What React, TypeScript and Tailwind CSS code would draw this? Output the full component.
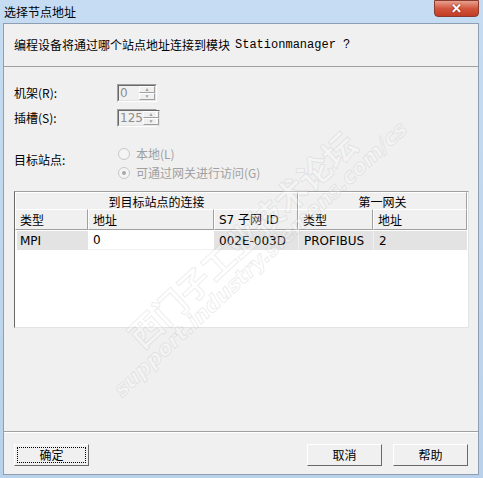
import React from "react";

const cjk = "font-['SimSun','Noto_Sans_CJK_SC',sans-serif]";
const sans = "font-['DejaVu_Sans','Noto_Sans_CJK_SC',sans-serif]";

// Small spin box (disabled look)
const SpinBox = ({ value }: { value: string }) => (
  <div className="flex h-[18px] w-[40px] border border-t-[#a0a0a0] border-l-[#a0a0a0] border-b-white border-r-white bg-[#f0f0f0]">
    <div className="flex flex-1 items-center border border-t-[#696969] border-l-[#696969] border-b-[#e3e3e3] border-r-[#e3e3e3] pl-[1px] text-[12px] leading-none text-[#8d8d8d]">
      <span className={sans}>{value}</span>
      <div className="ml-auto flex h-full w-[16px] flex-col">
        <div className="flex flex-1 items-center justify-center border border-t-white border-l-white border-b-[#a0a0a0] border-r-[#a0a0a0] text-[5px] text-[#a0a0a0]">▲</div>
        <div className="flex flex-1 items-center justify-center border border-t-white border-l-white border-b-[#a0a0a0] border-r-[#a0a0a0] text-[5px] text-[#a0a0a0]">▼</div>
      </div>
    </div>
  </div>
);

const Radio = ({ label, checked }: { label: string; checked?: boolean }) => (
  <div className="flex h-[19px] items-center gap-[6px]">
    <div className="flex h-[12px] w-[12px] items-center justify-center rounded-full border border-[#c8c8c8] bg-[#f4f4f4]">
      {checked && <div className="h-[4px] w-[4px] rounded-full bg-[#a8a8a8]" />}
    </div>
    <span className={`${cjk} text-[12px] text-[#a0a0a0]`}>{label}</span>
  </div>
);

const HeadCell = ({ children, className = "" }: { children: React.ReactNode; className?: string }) => (
  <div
    className={`flex items-center border border-t-white border-l-white border-b-[#a0a0a0] border-r-[#a0a0a0] bg-[#f0f0f0] text-[12px] text-black ${className}`}
  >
    {children}
  </div>
);

const Button = ({ label, focused }: { label: string; focused?: boolean }) => (
  <div className="h-[22px] w-[75px] border border-t-white border-l-white border-b-[#696969] border-r-[#696969] bg-[#f0f0f0] p-[2px]">
    <div
      className={`flex h-full items-center justify-center ${cjk} text-[12px] text-black ${
        focused ? "border border-dotted border-black" : ""
      }`}
    >
      {label}
    </div>
  </div>
);

export default function App() {
  const cols = "grid grid-cols-[73px_126px_84px_75px_94px]";
  return (
    <div className="relative flex h-[478px] w-[483px] flex-col overflow-hidden bg-gradient-to-b from-[#c6dcf2] to-[#b9d1ea] pb-[3px] pl-[3px] pr-[4px]">
      {/* title bar */}
      <div className="flex h-[23px] items-center">
        <span className={`${cjk} pl-[1px] text-[12px] text-black`}>选择节点地址</span>
        <div className="ml-auto flex h-[17px] w-[45px] -translate-y-[3px] items-center justify-center rounded-b-[4px] border border-[#8a3a2e] bg-gradient-to-b from-[#e8a18f] via-[#d2553d] to-[#c13d23]">
          <span className="text-[13px] font-bold leading-none text-white [text-shadow:0_0_2px_#6a1a10]">✕</span>
        </div>
      </div>

      {/* client area */}
      <div className="flex flex-1 flex-col border border-[#8e9fb3] bg-[#f0f0f0]">
        <div className="flex h-[43px] items-center border-b border-[#a0a0a0] pl-[10px]">
          <span className={`${cjk} text-[12px] text-black`}>编程设备将通过哪个站点地址连接到模块</span>
          <span className="ml-[5px] font-['Liberation_Mono',monospace] text-[12px] text-black">Stationmanager ?</span>
        </div>

        <div className="flex flex-col px-[10px] pt-[17px]">
          <div className="flex items-center">
            <span className={`${cjk} w-[103px] text-[12px] text-black`}>机架(R):</span>
            <SpinBox value="0" />
          </div>
          <div className="mt-[7px] flex items-center">
            <span className={`${cjk} w-[103px] text-[12px] text-black`}>插槽(S):</span>
            <SpinBox value="125" />
          </div>

          <div className="mt-[17px] flex">
            <span className={`${cjk} w-[103px] pt-[7px] text-[12px] text-black`}>目标站点:</span>
            <div className="flex flex-col pl-[1px]">
              <Radio label="本地(L)" />
              <Radio label="可通过网关进行访问(G)" checked />
            </div>
          </div>

          {/* connection table */}
          <div className="mt-[9px] h-[137px] w-[455px] border border-t-[#a0a0a0] border-l-[#696969] border-b-[#e3e3e3] border-r-[#e3e3e3] bg-white">
            <div className="grid h-[17px] grid-cols-[283px_169px]">
              <HeadCell className={`${cjk} justify-center`}>到目标站点的连接</HeadCell>
              <HeadCell className={`${cjk} justify-center`}>第一网关</HeadCell>
            </div>
            <div className={`${cols} h-[21px]`}>
              <HeadCell className={`${cjk} pl-[4px]`}>类型</HeadCell>
              <HeadCell className={`${cjk} pl-[4px]`}>地址</HeadCell>
              <HeadCell className={`${sans} pl-[4px]`}>S7 子网 ID</HeadCell>
              <HeadCell className={`${cjk} pl-[4px]`}>类型</HeadCell>
              <HeadCell className={`${cjk} pl-[4px]`}>地址</HeadCell>
            </div>
            <div className={`${cols} mt-[1px] h-[19px] text-[12px] text-black ${sans}`}>
              <div className="ml-[2px] flex items-center bg-[#e3e3e3] pl-[3px]">MPI</div>
              <div className="flex items-center border-b border-[#f0f0f0] bg-white pl-[5px]">0</div>
              <div className="flex items-center bg-[#e3e3e3] pl-[5px]">002E-003D</div>
              <div className="flex items-center border-l border-[#f0f0f0] bg-[#e3e3e3] pl-[5px]">PROFIBUS</div>
              <div className="flex items-center border-l border-[#f0f0f0] bg-[#e3e3e3] pl-[5px]">2</div>
            </div>
          </div>
        </div>

        <div className="mt-auto border-t border-[#a0a0a0] shadow-[0_1px_0_#ffffff]" />
        <div className="flex items-start px-[10px] pb-[8px] pt-[12px]">
          <Button label="确定" focused />
          <div className="ml-auto flex gap-[11px]">
            <Button label="取消" />
            <Button label="帮助" />
          </div>
        </div>
      </div>

      {/* watermark */}
      <div className="pointer-events-none absolute left-[250px] top-[248px] flex -translate-x-1/2 -translate-y-1/2 rotate-[-43deg] flex-col items-center whitespace-nowrap text-white/30 [-webkit-text-stroke:1px_rgba(170,170,170,0.22)]">
        <span className={`${cjk} text-[33px] font-bold leading-none`}>西门子工业技术论坛</span>
        <span className="-mt-[2px] font-['DejaVu_Sans',sans-serif] text-[21px] font-bold italic leading-tight">support.industry.siemens.com/cs</span>
      </div>
    </div>
  );
}
